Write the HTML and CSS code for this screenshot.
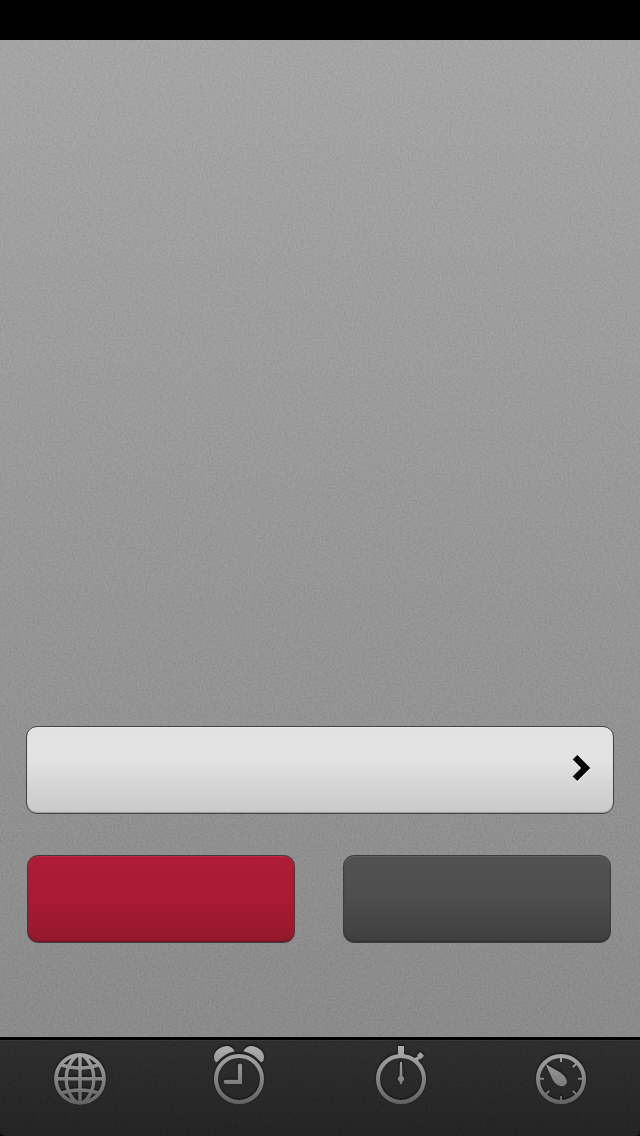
FILE: index.html
```html
<!DOCTYPE html>
<html lang="en">
<head>
<meta charset="utf-8">
<title>Clock</title>
<link rel="stylesheet" href="styles.css">
</head>
<body>
<div class="app">
  <header class="status-bar"></header>
  <main class="screen">
    <button class="row-button" aria-label="Open">
      <svg class="chevron" width="20" height="30" viewBox="0 0 20 30"><path d="M3 3.2 13.7 14 3 24.8"/></svg>
    </button>
    <div class="actions">
      <button class="action action-primary" aria-label="Primary"></button>
      <button class="action action-secondary" aria-label="Secondary"></button>
    </div>
  </main>
  <nav class="tab-bar">
    <a class="tab">
      <svg class="icon" viewBox="0 10 80 80">
        <defs>
          <linearGradient id="metal" gradientUnits="userSpaceOnUse" x1="0" y1="15" x2="0" y2="75">
            <stop offset="0" stop-color="#b0b0b0"/><stop offset="1" stop-color="#626262"/>
          </linearGradient>
          <clipPath id="ball"><circle cx="40" cy="49" r="25"/></clipPath>
        </defs>
        <circle class="line" cx="40" cy="48.8" r="24" stroke-width="3.8"/>
        <g class="line" clip-path="url(#ball)" stroke-width="3.5">
          <path d="M40 23.5 40.01 74.5M14 48.8 66 48.81"/>
          <path d="M38.5 24C22 36 22 62 38.5 74M41.5 24C58 36 58 62 41.5 74"/>
          <path d="M19 34Q40 42 61 34M19 64Q40 56 61 64"/>
        </g>
      </svg>
    </a>
    <a class="tab">
      <svg class="icon" viewBox="0 10 80 80">
        <circle class="line" cx="39" cy="49" r="23" stroke-width="4.1"/>
        <path class="solid" d="M17 32.2Q14 32 14 27C14 20 22 15.8 27.5 16Q32 16.3 34.6 21.2Q24 23.5 17 32.2ZM61 32.2Q64 32 64 27C64 20 56 15.8 50.5 16Q46 16.3 43.4 21.2Q54 23.5 61 32.2Z"/>
        <path class="line" d="M40 35.5V51.8H25.8" stroke-width="4.2" stroke-linecap="round"/>
      </svg>
    </a>
    <a class="tab">
      <svg class="icon" viewBox="0 10 80 80">
        <circle class="line" cx="41" cy="49" r="23" stroke-width="4.1"/>
        <path class="solid" d="M38 16h6v10h-6zM53.5 28.5 58 26.3 57 25.3 60.3 22 64 25.8 60.6 29.2 59.5 28.4 57.3 32.5zM40 32h2l.4 13.8q1.8 1.4 1.8 3.2-.2 1.8-1.9 2.9L42 54h-2l-.3-2.1q-1.8-1.1-2-2.9 0-1.8 1.9-3.2z"/>
      </svg>
    </a>
    <a class="tab">
      <svg class="icon" viewBox="0 10 80 80">
        <circle class="line" cx="41" cy="49" r="23" stroke-width="4.1"/>
        <path class="line" d="M41 26 41.01 32M41 66 41.01 72M18 48.8 24 48.81M58 48.8 64 48.81M52.8 37.2 56.5 33.5M25.5 64.5 29.2 60.8M52.8 60.8 56.5 64.5" stroke-width="2.1"/>
        <path class="solid" d="M25.5 34 40 42.2Q47 47.3 47 51.5 46.3 56.3 41.8 56.2 36.5 56 32.8 50Z"/>
      </svg>
    </a>
  </nav>
  <svg class="grain" width="640" height="1096">
    <filter id="noise" x="0" y="0" width="100%" height="100%" color-interpolation-filters="sRGB">
      <feTurbulence type="fractalNoise" baseFrequency="0.5" numOctaves="2" seed="4"/>
      <feColorMatrix values="1 0 0 0 0  1 0 0 0 0  1 0 0 0 0  0 0 0 0 1"/>
    </filter>
    <rect width="640" height="996" filter="url(#noise)" opacity=".09"/>
    <rect y="1000" width="640" height="96" filter="url(#noise)" opacity=".045"/>
  </svg>
</div>
</body>
</html>
```
FILE: styles.css
```css
body {
  margin: 0;
  background: #000;
  font-family: "Liberation Sans", Arial, sans-serif;
}

.app {
  position: relative;
  display: flex;
  flex-direction: column;
  width: 640px;
  height: 1136px;
  overflow: hidden;
}

.status-bar {
  height: 40px;
  background: #000;
}

.screen {
  box-sizing: border-box;
  display: flex;
  flex-direction: column;
  justify-content: flex-end;
  height: 997px;
  padding: 0 26px 94px;
  background: linear-gradient(#a9a9a9, #9a9a9a 50%, #8c8c8c);
}

.row-button {
  position: relative;
  z-index: 2;
  box-sizing: border-box;
  display: flex;
  align-items: center;
  justify-content: flex-end;
  height: 88px;
  padding: 0 21px 2px;
  border: 1px solid #444;
  border-radius: 11px;
  background: linear-gradient(#e2e2e2, #e3e3e3 35%, #d5d5d5 68%, #c9c9c9);
  box-shadow: inset 0 1px 1px #eaeaea, inset 0 -1px 1px #999;
}

.chevron {
  fill: none;
  stroke: #000;
  stroke-width: 6.4;
  filter: drop-shadow(0 1px 0 #fff);
}

.actions {
  position: relative;
  z-index: 2;
  display: flex;
  gap: 48px;
  margin: 41px 1px 0;
}

.action {
  box-sizing: border-box;
  width: 268px;
  height: 88px;
  padding: 0;
  border: 1px solid #3c3c3c;
  border-radius: 11px;
}

.action-primary {
  background: linear-gradient(#ae1c37, #aa1a35 50%, #93182c);
  box-shadow: inset 0 1px 1px #c02b49, inset 0 -1px 1px #75152a;
}

.action-secondary {
  background: linear-gradient(#525252, #4d4d4d 50%, #3f3f3f);
  box-shadow: inset 0 1px 1px #626262, inset 0 -1px 1px #303030;
}

.tab-bar {
  box-sizing: border-box;
  display: flex;
  height: 99px;
  border-top: 3px solid #000;
  border-radius: 0 0 5px 5px;
  background: linear-gradient(#2b2b2b, #202020);
  box-shadow: inset 0 1px 0 #363636;
}

.tab {
  position: relative;
  z-index: 2;
  display: flex;
  justify-content: center;
  width: 160px;
}

.icon {
  width: 80px;
  height: 80px;
  filter: drop-shadow(0 -1px 1px #111);
}

.line {
  fill: none;
  stroke: url(#metal);
}

.solid {
  fill: url(#metal);
}

.grain {
  position: absolute;
  top: 40px;
  left: 0;
  z-index: 1;
  pointer-events: none;
}
```
